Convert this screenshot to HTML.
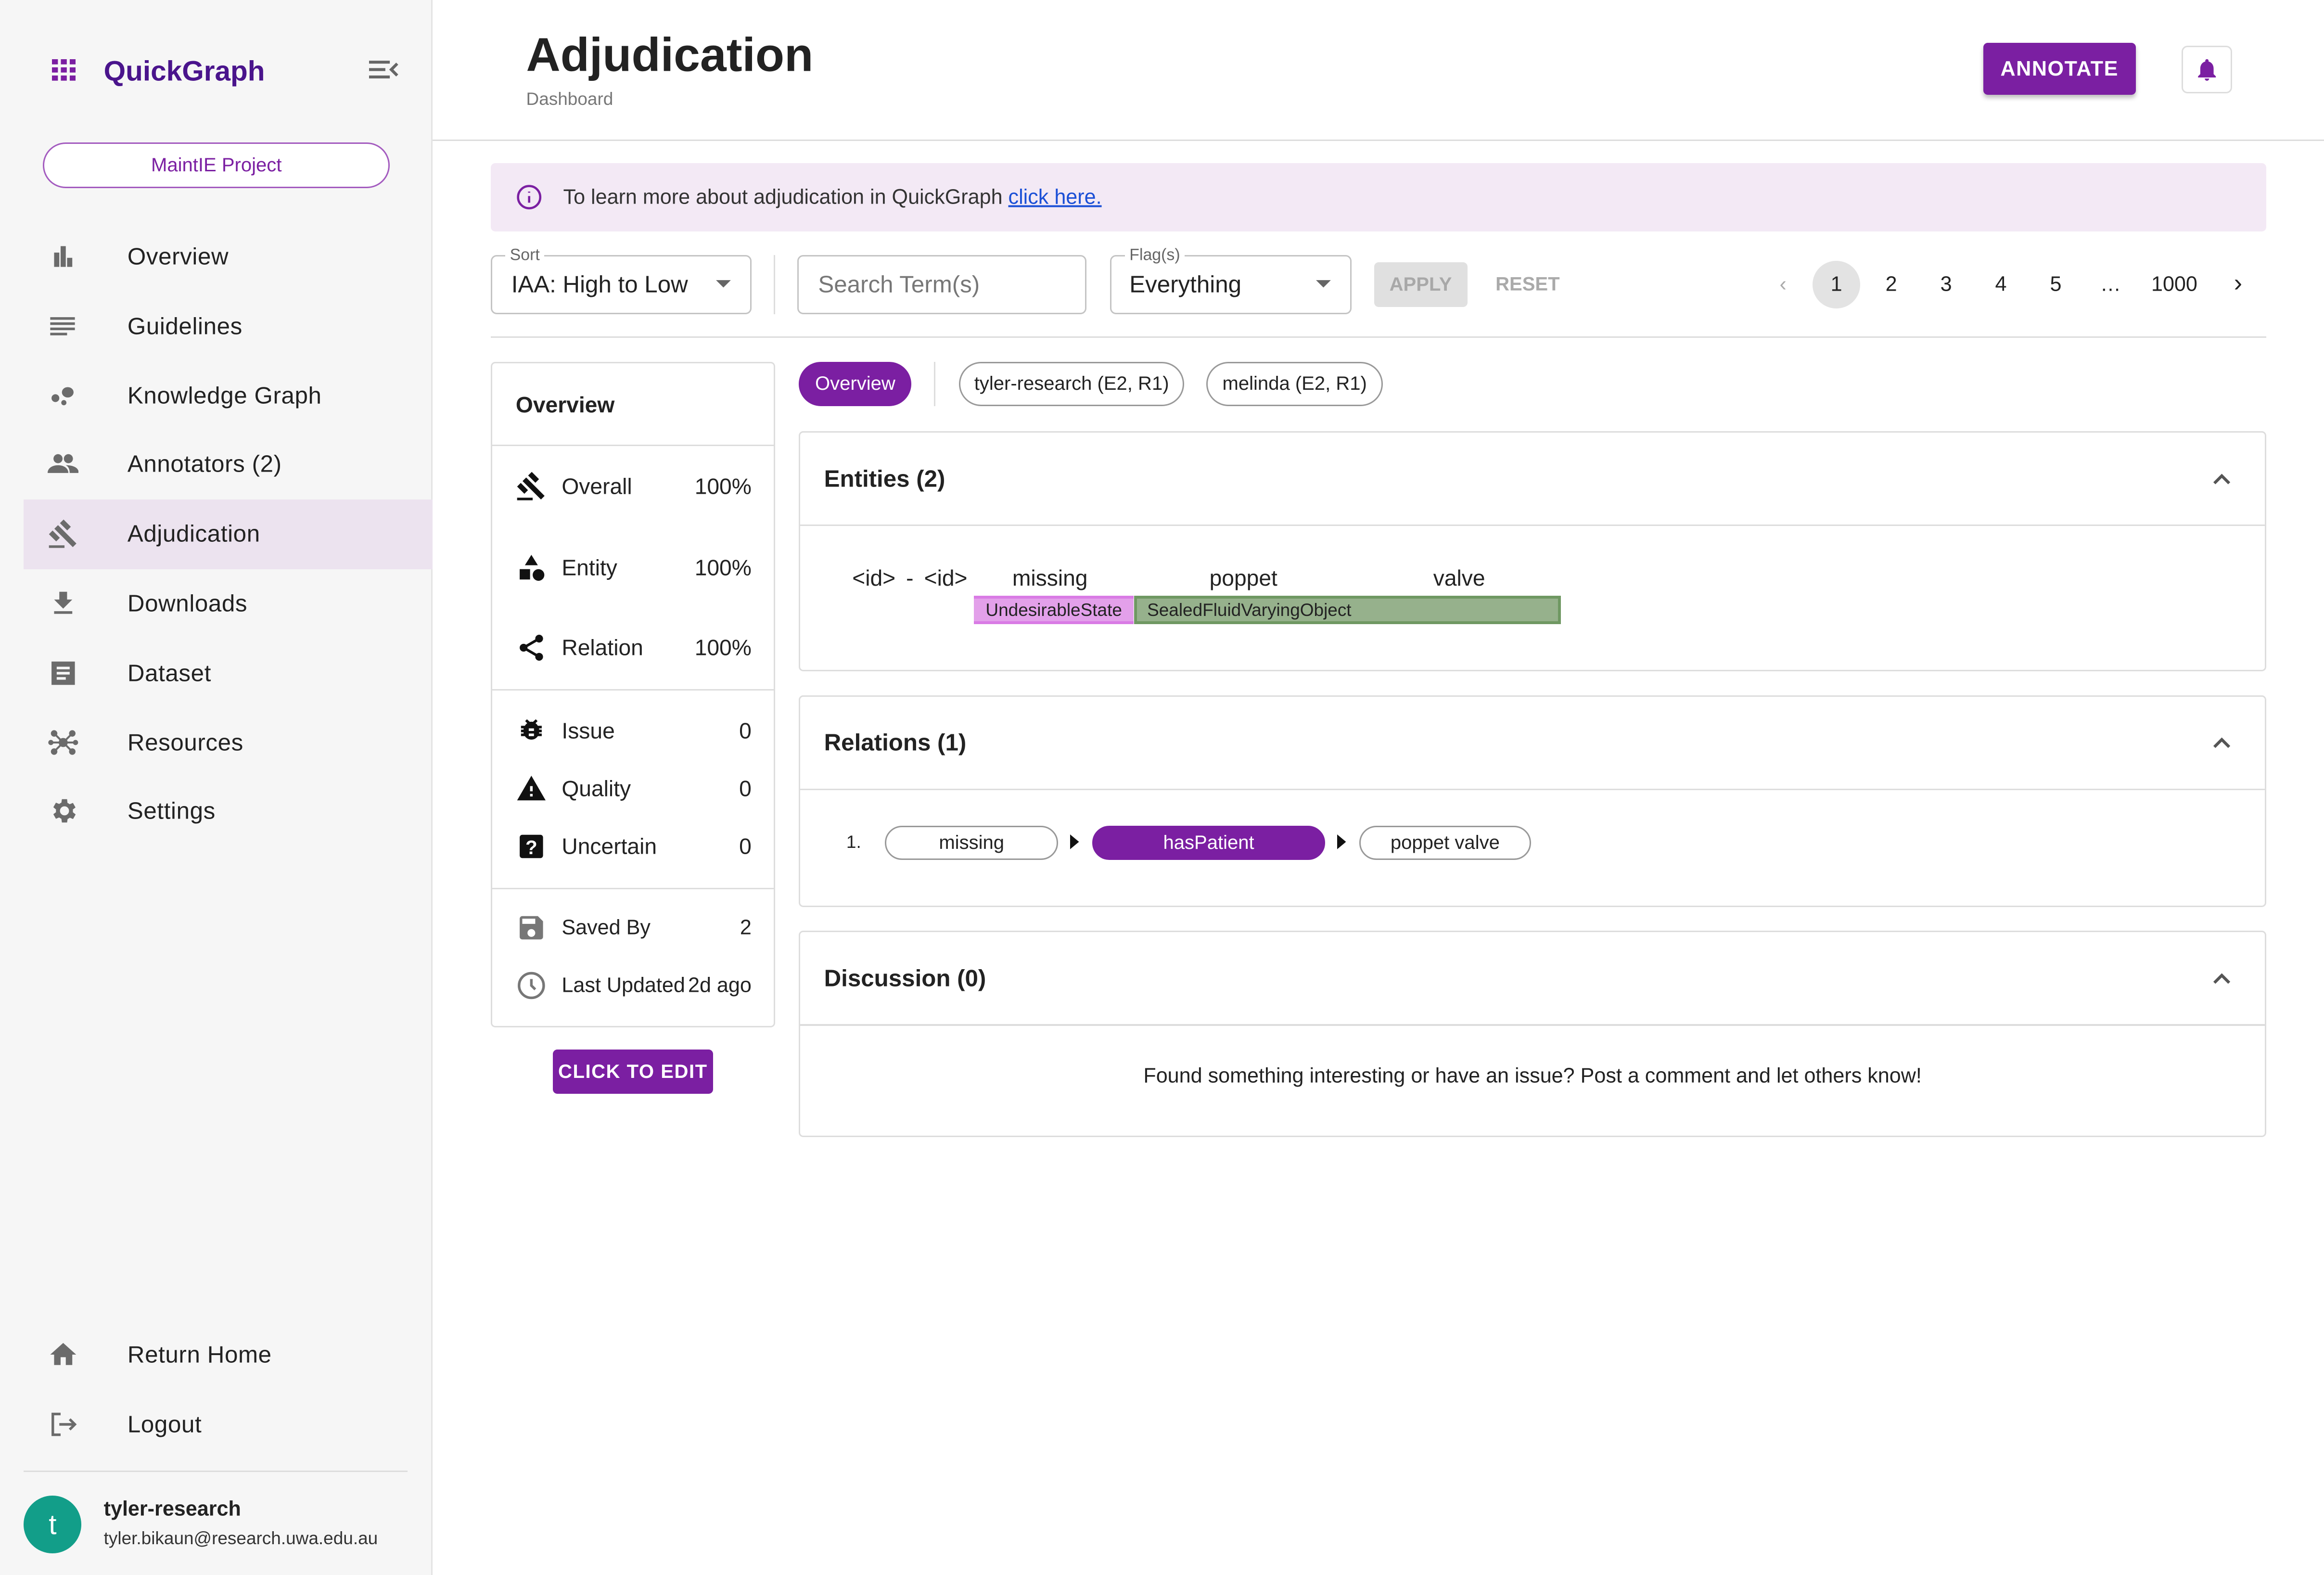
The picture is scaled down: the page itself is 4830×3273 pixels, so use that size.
<!DOCTYPE html>
<html><head><meta charset="utf-8"><style>
*{box-sizing:border-box;margin:0;padding:0}
html,body{width:4830px;height:3273px;overflow:hidden;background:#fff}
#r{zoom:3.0804;width:1568px;height:1063px;position:relative;font-family:"Liberation Sans",sans-serif;color:#222}
.a{position:absolute}
.sb{left:0;top:0;width:292px;height:1063px;background:#f6f6f6;border-right:1px solid #e4e4e4}
.nav{position:absolute;left:86px;font-size:16px;color:#222;transform:translateY(-50%);letter-spacing:.2px}
.ic{position:absolute;left:32px;width:21px;height:21px;transform:translateY(-50%)}
.c{transform:translateY(-50%)}
.btn{background:#7b1fa2;color:#fff;font-weight:bold;font-size:14px;display:flex;align-items:center;justify-content:center;border-radius:3px;letter-spacing:.5px}
.card{border:1px solid #ddd;border-radius:3px;background:#fff}
.fl{border:1px solid #c4c4c4;border-radius:4px;background:#fff}
.lbl{font-size:11px;color:#666;background:#fff;padding:0 3px}
.pg{font-size:14px;transform:translate(-50%,-50%)}
.row{position:absolute;left:16px;right:15px;display:flex;align-items:center;font-size:15px;transform:translateY(-50%)}
.row span.v{margin-left:auto}
.row svg{width:21px;height:21px;margin-right:10px}
.chip{position:absolute;border:1px solid #999;border-radius:16px;font-size:13px;display:flex;align-items:center;justify-content:center}
.hd{position:absolute;left:16px;font-size:16px;font-weight:bold;color:#222;transform:translateY(-50%)}
.chev{position:absolute;right:22px;width:14px;height:14px;transform:translateY(-50%)}
</style></head><body><div id="r">
<div class="a sb"></div>
<!-- logo -->
<svg class="a" style="left:35px;top:40px" width="16" height="15" viewBox="0 0 16 15" fill="#7b1fa2"><rect x="0" y="0" width="4" height="3.5"/><rect x="6" y="0" width="4" height="3.5"/><rect x="12" y="0" width="4" height="3.5"/><rect x="0" y="5.5" width="4" height="3.5"/><rect x="6" y="5.5" width="4" height="3.5"/><rect x="12" y="5.5" width="4" height="3.5"/><rect x="0" y="11" width="4" height="3.5"/><rect x="6" y="11" width="4" height="3.5"/><rect x="12" y="11" width="4" height="3.5"/></svg>
<div class="a c" style="left:70px;top:48px;font-size:19px;font-weight:bold;color:#4a148c">QuickGraph</div>
<svg class="a" style="left:249px;top:40px" width="20" height="14" viewBox="0 0 20 14" fill="none" stroke="#666" stroke-width="2"><path d="M0 2h14M0 7h11M0 12h14M19 3l-4 4 4 4"/></svg>
<div class="a" style="left:29px;top:96px;width:234px;height:31px;border:1px solid #a35bbf;border-radius:16px;background:#fff;display:flex;align-items:center;justify-content:center;font-size:13px;color:#7b1fa2">MaintIE Project</div>
<div class="a" style="left:16px;top:337px;width:276px;height:47px;background:#ece3ef"></div>
<!-- nav icons -->
<svg class="ic" style="top:173px" viewBox="0 0 24 24" fill="#6b6b6b"><path d="M5 9h4v11H5zM10 4h4v16h-4zM15 13h4v7h-4z"/></svg>
<svg class="ic" style="top:220px" viewBox="0 0 24 24" fill="#6b6b6b"><path d="M2 5h19v2H2zM2 9h19v2H2zM2 13h19v2H2zM2 17h13v2H2z"/></svg>
<svg class="ic" style="top:267px" viewBox="0 0 24 24" fill="#6b6b6b"><circle cx="6" cy="14" r="3"/><ellipse cx="15.5" cy="9.5" rx="4.5" ry="4"/><circle cx="12.5" cy="17.5" r="2"/></svg>
<svg class="ic" style="top:313px" viewBox="0 0 24 24" fill="#6b6b6b"><circle cx="8" cy="8" r="3.5"/><circle cx="16" cy="8" r="3.5"/><path d="M0 19c0-4 4-6 8-6s8 2 8 6zM14 13c4 0 10 1 10 6h-7c0-3-1-5-3-6z"/></svg>
<svg class="ic" style="top:360px" viewBox="0 0 24 24" fill="#6b6b6b"><path d="M1 21h12v2H1zM5.2 8.2l2.8-2.8 14.2 14.2-2.8 2.8zM12.3 1.1l5.6 5.6-2.8 2.8-5.6-5.6zM3.8 9.6l5.6 5.6-2.8 2.8L1 12.4z"/></svg>
<svg class="ic" style="top:407px" viewBox="0 0 24 24" fill="#6b6b6b"><path d="M19 9h-4V3H9v6H5l7 7zM5 18v2h14v-2z"/></svg>
<svg class="ic" style="top:454px" viewBox="0 0 24 24" fill="#6b6b6b"><path d="M3 3h18v18H3zM7 7v2h10V7zM7 11v2h10v-2zM7 15v2h7v-2z" fill-rule="evenodd"/></svg>
<svg class="ic" style="top:501px" viewBox="0 0 24 24" fill="#6b6b6b"><circle cx="12" cy="12" r="3.5"/><circle cx="5" cy="5" r="2.5"/><circle cx="19" cy="5" r="2.5"/><circle cx="5" cy="19" r="2.5"/><circle cx="19" cy="19" r="2.5"/><circle cx="2.5" cy="12" r="2"/><circle cx="21.5" cy="12" r="2"/><path d="M5 5l14 14M19 5L5 19M2 12h20" stroke="#6b6b6b" stroke-width="1.5"/></svg>
<svg class="ic" style="top:547px" viewBox="0 0 24 24" fill="#6b6b6b"><path d="M19.4 13c.1-.3.1-.7.1-1s0-.7-.1-1l2.1-1.6-2-3.5-2.5 1a7 7 0 0 0-1.7-1L15 3h-4l-.4 2.7a7 7 0 0 0-1.7 1l-2.5-1-2 3.5L6.5 11c0 .3-.1.7-.1 1s0 .7.1 1l-2.1 1.6 2 3.5 2.5-1c.5.4 1.1.7 1.7 1L11 21h4l.4-2.7c.6-.3 1.2-.6 1.7-1l2.5 1 2-3.5zM13 15.5a3.5 3.5 0 1 1 0-7 3.5 3.5 0 0 1 0 7z"/></svg>
<svg class="ic" style="top:914px" viewBox="0 0 24 24" fill="#6b6b6b"><path d="M10 20v-6h4v6h5v-8h3L12 3 2 12h3v8z"/></svg>
<svg class="ic" style="top:961px" viewBox="0 0 24 24" fill="none" stroke="#6b6b6b" stroke-width="2"><path d="M10 4H4v16h6M9 12h12M17 8l4 4-4 4"/></svg>
<div class="nav" style="top:173px">Overview</div>
<div class="nav" style="top:220px">Guidelines</div>
<div class="nav" style="top:267px">Knowledge Graph</div>
<div class="nav" style="top:313px">Annotators (2)</div>
<div class="nav" style="top:360px">Adjudication</div>
<div class="nav" style="top:407px">Downloads</div>
<div class="nav" style="top:454px">Dataset</div>
<div class="nav" style="top:501px">Resources</div>
<div class="nav" style="top:547px">Settings</div>
<div class="nav" style="top:914px">Return Home</div>
<div class="nav" style="top:961px">Logout</div>
<div class="a" style="left:16px;top:992px;width:259px;height:1px;background:#ddd"></div>
<div class="a" style="left:16px;top:1009px;width:39px;height:39px;border-radius:50%;background:#129e89;color:#fff;font-size:19px;display:flex;align-items:center;justify-content:center">t</div>
<div class="a c" style="left:70px;top:1018px;font-size:14px;font-weight:bold">tyler-research</div>
<div class="a c" style="left:70px;top:1038px;font-size:12px;color:#333">tyler.bikaun@research.uwa.edu.au</div>

<!-- header -->
<div class="a c" style="left:355px;top:37px;font-size:32px;font-weight:bold;color:#222">Adjudication</div>
<div class="a c" style="left:355px;top:67px;font-size:12px;color:#777">Dashboard</div>
<div class="a btn" style="left:1338px;top:29px;width:103px;height:35px;box-shadow:0 2px 3px rgba(0,0,0,.25)">ANNOTATE</div>
<div class="a" style="left:1472px;top:31px;width:34px;height:32px;border:1px solid #ddd;border-radius:4px"></div>
<svg class="a" style="left:1480px;top:37px" width="18" height="20" viewBox="0 0 24 24" fill="#7b1fa2"><path d="M12 22a2 2 0 0 0 2-2h-4a2 2 0 0 0 2 2zm6-6V11c0-3-1.6-5.6-4.5-6.3V4a1.5 1.5 0 0 0-3 0v.7C7.6 5.4 6 8 6 11v5l-2 2v1h16v-1z"/></svg>
<div class="a" style="left:292px;top:94px;width:1276px;height:1px;background:#ddd"></div>

<!-- banner -->
<div class="a" style="left:331px;top:110px;width:1198px;height:46px;background:#f3e9f5;border-radius:3px"></div>
<svg class="a" style="left:348px;top:124px" width="18" height="18" viewBox="0 0 24 24" fill="none" stroke="#7b1fa2" stroke-width="2"><circle cx="12" cy="12" r="10"/><path d="M12 11v6M12 7v1"/></svg>
<div class="a c" style="left:380px;top:133px;font-size:14px;color:#333">To learn more about adjudication in QuickGraph <span style="color:#1a4fd6;text-decoration:underline">click here.</span></div>

<!-- filters -->
<div class="a fl" style="left:331px;top:172px;width:176px;height:40px"></div>
<div class="a lbl c" style="left:341px;top:172px">Sort</div>
<div class="a c" style="left:345px;top:192px;font-size:16px">IAA: High to Low</div>
<svg class="a" style="left:482px;top:188px" width="12" height="7"><path d="M1 1h10L6 6z" fill="#666"/></svg>
<div class="a" style="left:522px;top:172px;width:1px;height:40px;background:#ddd"></div>
<div class="a fl" style="left:538px;top:172px;width:195px;height:40px"></div>
<div class="a c" style="left:552px;top:192px;font-size:16px;color:#777">Search Term(s)</div>
<div class="a fl" style="left:749px;top:172px;width:163px;height:40px"></div>
<div class="a lbl c" style="left:759px;top:172px">Flag(s)</div>
<div class="a c" style="left:762px;top:192px;font-size:16px">Everything</div>
<svg class="a" style="left:887px;top:188px" width="12" height="7"><path d="M1 1h10L6 6z" fill="#666"/></svg>
<div class="a" style="left:927px;top:177px;width:63px;height:30px;background:#e0e0e0;border-radius:3px;color:#a8a8a8;font-size:13px;font-weight:bold;display:flex;align-items:center;justify-content:center">APPLY</div>
<div class="a c" style="left:1009px;top:192px;font-size:13px;color:#aaa;font-weight:bold">RESET</div>
<div class="a" style="left:1223px;top:176px;width:32px;height:32px;border-radius:50%;background:#e3e3e3"></div>
<div class="a pg" style="left:1203px;top:192px;color:#aaa">‹</div>
<div class="a pg" style="left:1239px;top:192px">1</div>
<div class="a pg" style="left:1276px;top:192px">2</div>
<div class="a pg" style="left:1313px;top:192px">3</div>
<div class="a pg" style="left:1350px;top:192px">4</div>
<div class="a pg" style="left:1387px;top:192px">5</div>
<div class="a pg" style="left:1424px;top:192px">…</div>
<div class="a pg" style="left:1467px;top:192px">1000</div>
<div class="a pg" style="left:1510px;top:191px;font-size:17px">›</div>
<div class="a" style="left:331px;top:227px;width:1198px;height:1px;background:#ddd"></div>

<!-- overview card -->
<div class="a card" style="left:331px;top:244px;width:192px;height:449px">
<div class="hd" style="top:28px;font-size:15px">Overview</div>
<div class="a" style="left:0;right:0;top:55px;height:1px;background:#ddd"></div>
<div class="row" style="top:83px"><svg viewBox="0 0 24 24" fill="#111"><path d="M1 21h12v2H1zM5.2 8.2l2.8-2.8 14.2 14.2-2.8 2.8zM12.3 1.1l5.6 5.6-2.8 2.8-5.6-5.6zM3.8 9.6l5.6 5.6-2.8 2.8L1 12.4z"/></svg>Overall<span class="v">100%</span></div>
<div class="row" style="top:138px"><svg viewBox="0 0 24 24" fill="#111"><path d="M12 2l5 8H7z"/><rect x="3" y="13" width="8" height="8"/><circle cx="17.5" cy="17.5" r="4.5"/></svg>Entity<span class="v">100%</span></div>
<div class="row" style="top:192px"><svg viewBox="0 0 24 24" fill="#111"><circle cx="18" cy="5" r="3"/><circle cx="6" cy="12" r="3"/><circle cx="18" cy="19" r="3"/><path d="M6 12l12-7M6 12l12 7" stroke="#111" stroke-width="2"/></svg>Relation<span class="v">100%</span></div>
<div class="a" style="left:0;right:0;top:220px;height:1px;background:#ddd"></div>
<div class="row" style="top:248px"><svg viewBox="0 0 24 24" fill="#111"><path d="M20 8h-3a6 6 0 0 0-1.8-2l1.6-1.6-1.4-1.4L13.2 5a6 6 0 0 0-2.4 0L8.6 3 7.2 4.4 8.8 6A6 6 0 0 0 7 8H4v2h2v1H4v2h2v1H4v2h3a6 6 0 0 0 10 0h3v-2h-2v-1h2v-2h-2v-1h2zm-6 8h-4v-2h4zm0-4h-4v-2h4z"/></svg>Issue<span class="v">0</span></div>
<div class="row" style="top:287px"><svg viewBox="0 0 24 24" fill="#111"><path d="M1 21h22L12 2zm12-3h-2v-2h2zm0-4h-2v-4h2z"/></svg>Quality<span class="v">0</span></div>
<div class="row" style="top:326px"><svg viewBox="0 0 24 24"><rect x="3" y="3" width="18" height="18" rx="2" fill="#111"/><text x="12" y="18" font-size="15" font-weight="bold" fill="#fff" text-anchor="middle" font-family="Liberation Sans">?</text></svg>Uncertain<span class="v">0</span></div>
<div class="a" style="left:0;right:0;top:354px;height:1px;background:#ddd"></div>
<div class="row" style="top:381px;font-size:14px"><svg viewBox="0 0 24 24" fill="#777"><path d="M17 3H5a2 2 0 0 0-2 2v14a2 2 0 0 0 2 2h14a2 2 0 0 0 2-2V7zm-5 16a3 3 0 1 1 0-6 3 3 0 0 1 0 6zm3-10H5V5h10z"/></svg>Saved By<span class="v">2</span></div>
<div class="row" style="top:420px;font-size:14px"><svg viewBox="0 0 24 24" fill="none" stroke="#777" stroke-width="2"><circle cx="12" cy="12" r="9.5"/><path d="M12 7v5l3 3"/></svg>Last Updated<span class="v">2d ago</span></div>
</div>
<div class="a btn" style="left:373px;top:708px;width:108px;height:30px;font-size:13px">CLICK TO EDIT</div>

<!-- chips -->
<div class="chip" style="left:539px;top:244px;width:76px;height:30px;background:#7b1fa2;border-color:#7b1fa2;color:#fff">Overview</div>
<div class="a" style="left:630px;top:244px;width:1px;height:30px;background:#ddd"></div>
<div class="chip" style="left:647px;top:244px;width:152px;height:30px">tyler-research (E2, R1)</div>
<div class="chip" style="left:814px;top:244px;width:119px;height:30px">melinda (E2, R1)</div>

<!-- entities -->
<div class="a card" style="left:539px;top:291px;width:990px;height:162px">
<div class="hd" style="top:31px;font-weight:600">Entities (2)</div>
<svg class="chev" style="top:31px" viewBox="0 0 14 14" fill="none" stroke="#555" stroke-width="2"><path d="M2 10l5-5 5 5"/></svg>
<div class="a" style="left:0;right:0;top:62px;height:1px;background:#ddd"></div>
</div>
<div class="a c" style="left:575px;top:390px;font-size:15px;word-spacing:3px">&lt;id&gt; - &lt;id&gt;</div>
<div class="a c" style="left:683px;top:390px;font-size:15px">missing</div>
<div class="a c" style="left:816px;top:390px;font-size:15px">poppet</div>
<div class="a c" style="left:967px;top:390px;font-size:15px">valve</div>
<div class="a" style="left:657px;top:402px;width:108px;height:19px;background:#e3a0ea;border-top:2px solid #d97be5;border-bottom:2px solid #d97be5;font-size:12px;display:flex;align-items:center;justify-content:center">UndesirableState</div>
<div class="a" style="left:765px;top:402px;width:288px;height:19px;background:#96b18c;border:2px solid #6f9862;font-size:12px;display:flex;align-items:center;padding-left:7px">SealedFluidVaryingObject</div>

<!-- relations -->
<div class="a card" style="left:539px;top:469px;width:990px;height:143px">
<div class="hd" style="top:31px;font-weight:600">Relations (1)</div>
<svg class="chev" style="top:31px" viewBox="0 0 14 14" fill="none" stroke="#555" stroke-width="2"><path d="M2 10l5-5 5 5"/></svg>
<div class="a" style="left:0;right:0;top:62px;height:1px;background:#ddd"></div>
</div>
<div class="a c" style="left:571px;top:568px;font-size:12px">1.</div>
<div class="chip" style="left:597px;top:557px;width:117px;height:23px">missing</div>
<svg class="a" style="left:722px;top:563px" width="6" height="10"><path d="M0 0l6 5-6 5z" fill="#111"/></svg>
<div class="chip" style="left:737px;top:557px;width:157px;height:23px;background:#7b1fa2;border-color:#7b1fa2;color:#fff">hasPatient</div>
<svg class="a" style="left:902px;top:563px" width="6" height="10"><path d="M0 0l6 5-6 5z" fill="#111"/></svg>
<div class="chip" style="left:917px;top:557px;width:116px;height:23px">poppet valve</div>

<!-- discussion -->
<div class="a card" style="left:539px;top:628px;width:990px;height:139px">
<div class="hd" style="top:31px;font-weight:600">Discussion (0)</div>
<svg class="chev" style="top:31px" viewBox="0 0 14 14" fill="none" stroke="#555" stroke-width="2"><path d="M2 10l5-5 5 5"/></svg>
<div class="a" style="left:0;right:0;top:62px;height:1px;background:#ddd"></div>
<div class="a" style="left:0;right:0;top:97px;text-align:center;font-size:14px;transform:translateY(-50%)">Found something interesting or have an issue? Post a comment and let others know!</div>
</div>
</div></body></html>
